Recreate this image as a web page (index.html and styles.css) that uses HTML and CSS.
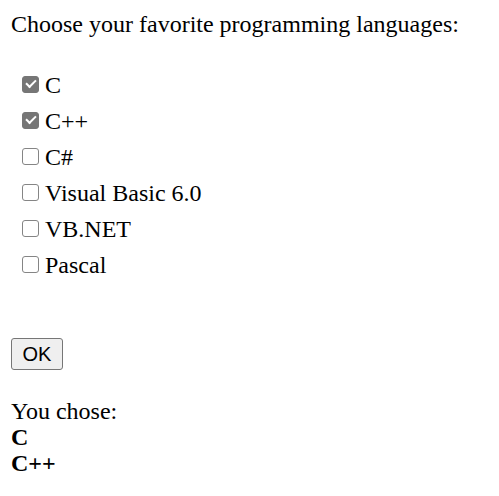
FILE: index.html
```html
<!DOCTYPE html>
<html>
<head>
<meta charset="utf-8">
<link rel="stylesheet" href="styles.css">
</head>
<body>
<form class="page">
  <p class="prompt">Choose your favorite programming languages:</p>
  <div class="options">
    <label class="option"><input type="checkbox" checked><span>C</span></label>
    <label class="option"><input type="checkbox" checked><span>C++</span></label>
    <label class="option"><input type="checkbox"><span>C#</span></label>
    <label class="option"><input type="checkbox"><span>Visual Basic 6.0</span></label>
    <label class="option"><input type="checkbox"><span>VB.NET</span></label>
    <label class="option"><input type="checkbox"><span>Pascal</span></label>
  </div>
  <div class="actions"><button type="button" class="ok">OK</button></div>
  <div class="result">
    <div>You chose:</div>
    <div class="choice">C</div>
    <div class="choice">C++</div>
  </div>
</form>
</body>
</html>
```
FILE: styles.css
```css
html, body {
  margin: 0;
  background: #fff;
}
body {
  font-family: "Liberation Serif", "Times New Roman", serif;
  font-size: 24px;
  color: #000;
}
.page {
  padding: 10px 11px;
  display: flex;
  flex-direction: column;
}
.prompt {
  margin: 0;
  line-height: 28px;
}
.options {
  margin-top: 28px;
  display: flex;
  flex-direction: column;
}
.option {
  height: 36px;
  display: flex;
  align-items: center;
  gap: 6px;
  padding-left: 11px;
  line-height: 28px;
}
.option span {
  position: relative;
  top: 1px;
}
.option input {
  appearance: none;
  -webkit-appearance: none;
  width: 17px;
  height: 17px;
  margin: 0;
  box-sizing: border-box;
  border: 1.5px solid #858585;
  border-radius: 3px;
  background: #fff;
  display: grid;
  place-content: center;
  flex: none;
}
.option input:checked {
  background: #767676;
  border-color: #767676;
}
.option input:checked::after {
  content: "";
  width: 8px;
  height: 4px;
  border-left: 2.5px solid #fff;
  border-bottom: 2.5px solid #fff;
  transform: translate(0, -1.5px) rotate(-45deg);
}
.actions {
  margin-top: 56px;
  display: flex;
}
.ok {
  font-family: "Liberation Sans", Arial, sans-serif;
  font-size: 20px;
  line-height: 23px;
  box-sizing: border-box;
  width: 52px;
  height: 32px;
  padding: 0;
  text-align: center;
  background: #efefef;
  color: #000;
  border: 1.5px solid #767676;
  border-radius: 3px;
}
.result {
  margin-top: 28px;
  line-height: 26px;
}
.choice {
  font-weight: bold;
}
```
